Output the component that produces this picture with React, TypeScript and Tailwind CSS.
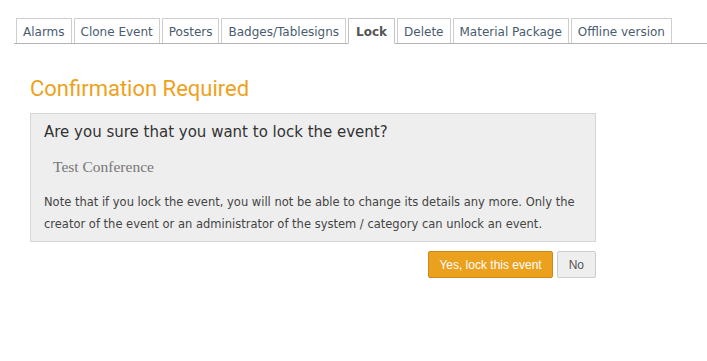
const tabs = [
  'Alarms',
  'Clone Event',
  'Posters',
  'Badges/Tablesigns',
  'Lock',
  'Delete',
  'Material Package',
  'Offline version',
];

export default function App() {
  const active = 'Lock';

  return (
    <div className="w-[707px] h-[361px] bg-white font-['DejaVu_Sans',sans-serif]">
      {/* Tab bar */}
      <div className="pt-[18px] ml-[14px] pl-[2px] flex gap-[2px] border-b border-[#b4b4b4]">
        {tabs.map(tab =>
          tab === active ? (
            <div
              key={tab}
              className="h-[26px] -mb-px pt-[2px] px-[7px] flex items-center bg-white border border-[#c4c4c4] border-b-white text-[12px] font-bold text-[#555]"
            >
              {tab}
            </div>
          ) : (
            <div
              key={tab}
              className="h-[25px] pt-[2px] px-[6px] flex items-center border border-b-0 border-[#cfcfcf] text-[12px] text-[#4a5b6e]"
            >
              {tab}
            </div>
          ),
        )}
      </div>

      {/* Content */}
      <div className="ml-[30px] w-[566px]">
        <h2 className="mt-[31px] text-[22px] leading-[28px] text-[#eea11c] font-['Roboto',sans-serif]">
          Confirmation Required
        </h2>

        <div className="mt-[10px] bg-[#eeeeee] border border-[#d6d6d6] px-[13px] pt-[8px] pb-[6px]">
          <div className="text-[15px] leading-[20px] text-[#333]">
            Are you sure that you want to lock the event?
          </div>
          <div className="mt-[13px] ml-[9px] text-[15.5px] text-[#777] font-['Liberation_Serif',serif]">
            Test Conference
          </div>
          <p className="mt-[13px] text-[11.5px] leading-[22px] text-[#444]">
            Note that if you lock the event, you will not be able to change its details any more. Only the
            creator of the event or an administrator of the system / category can unlock an event.
          </p>
        </div>

        <div className="mt-[9px] flex justify-end gap-[4px]">
          <button className="h-[27px] px-[10px] rounded-[2px] bg-[#eba11e] border border-[#cc8a14] text-white text-[12px] font-['Liberation_Sans',sans-serif]">
            Yes, lock this event
          </button>
          <button className="h-[27px] px-[11px] rounded-[2px] bg-[#eeeeee] border border-[#cccccc] text-[#555] text-[12px] font-['Liberation_Sans',sans-serif]">
            No
          </button>
        </div>
      </div>
    </div>
  );
}
